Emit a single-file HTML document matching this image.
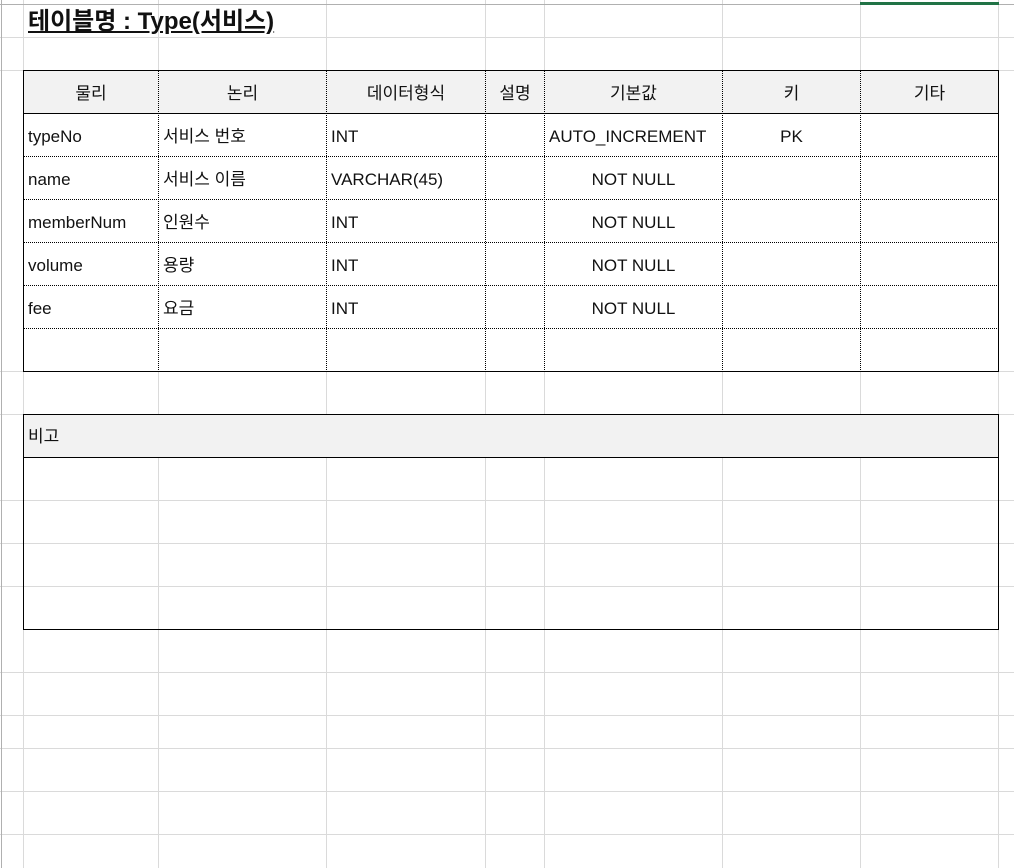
<!DOCTYPE html>
<html><head><meta charset="utf-8"><style>
body{margin:0;width:1014px;height:868px;overflow:hidden;background:#fff;position:relative;font-family:"Liberation Sans","Noto Sans CJK KR",sans-serif;font-size:17px;color:#111}
.t{position:absolute;white-space:nowrap;line-height:20px}
.c{text-align:center}
</style></head><body>
<svg width="1014" height="868" style="position:absolute;left:0;top:0">
<g stroke="#dadada" stroke-width="1">
<line x1="23.5" y1="0" x2="23.5" y2="868"/><line x1="158.5" y1="0" x2="158.5" y2="868"/><line x1="326.5" y1="0" x2="326.5" y2="868"/><line x1="485.5" y1="0" x2="485.5" y2="868"/><line x1="544.5" y1="0" x2="544.5" y2="868"/><line x1="722.5" y1="0" x2="722.5" y2="868"/><line x1="860.5" y1="0" x2="860.5" y2="868"/><line x1="998.5" y1="0" x2="998.5" y2="868"/>
<line x1="0" y1="37.5" x2="1014" y2="37.5"/><line x1="0" y1="70.5" x2="1014" y2="70.5"/><line x1="0" y1="371.5" x2="1014" y2="371.5"/><line x1="0" y1="414.5" x2="1014" y2="414.5"/><line x1="0" y1="500.5" x2="1014" y2="500.5"/><line x1="0" y1="543.5" x2="1014" y2="543.5"/><line x1="0" y1="586.5" x2="1014" y2="586.5"/><line x1="0" y1="672.5" x2="1014" y2="672.5"/><line x1="0" y1="715.5" x2="1014" y2="715.5"/><line x1="0" y1="748.5" x2="1014" y2="748.5"/><line x1="0" y1="791.5" x2="1014" y2="791.5"/><line x1="0" y1="834.5" x2="1014" y2="834.5"/>
</g>
<line x1="1.5" y1="0" x2="1.5" y2="868" stroke="#b0b0b0"/>
<line x1="0" y1="4.5" x2="1014" y2="4.5" stroke="#b0b0b0"/>
<rect x="860" y="2" width="139" height="3" fill="#217346"/>
<rect x="24" y="71" width="974" height="42" fill="#f2f2f2"/>
<rect x="24" y="415" width="974" height="42" fill="#f2f2f2"/>
<rect x="24" y="114" width="974" height="257" fill="#fff"/>
<g stroke="#000" stroke-width="1" stroke-dasharray="1,1">
<line x1="158.5" y1="71" x2="158.5" y2="371"/><line x1="326.5" y1="71" x2="326.5" y2="371"/><line x1="485.5" y1="71" x2="485.5" y2="371"/><line x1="544.5" y1="71" x2="544.5" y2="371"/><line x1="722.5" y1="71" x2="722.5" y2="371"/><line x1="860.5" y1="71" x2="860.5" y2="371"/>
<line x1="24" y1="156.5" x2="998" y2="156.5"/><line x1="24" y1="199.5" x2="998" y2="199.5"/><line x1="24" y1="242.5" x2="998" y2="242.5"/><line x1="24" y1="285.5" x2="998" y2="285.5"/><line x1="24" y1="328.5" x2="998" y2="328.5"/>
</g>
<g stroke="#000" stroke-width="1" fill="none">
<rect x="23.5" y="70.5" width="975" height="301"/>
<line x1="23" y1="113.5" x2="999" y2="113.5"/>
<rect x="23.5" y="414.5" width="975" height="215"/>
<line x1="23" y1="457.5" x2="999" y2="457.5"/>
</g>
</svg>
<div class="t" style="left:28px;top:8px;font-size:24px;font-weight:bold;text-decoration:underline;line-height:27px">테이블명 : Type(서비스)</div>
<div class="t c" style="left:24px;width:134px;top:84px">물리</div>
<div class="t c" style="left:159px;width:167px;top:84px">논리</div>
<div class="t c" style="left:327px;width:158px;top:84px">데이터형식</div>
<div class="t c" style="left:486px;width:58px;top:84px">설명</div>
<div class="t c" style="left:545px;width:177px;top:84px">기본값</div>
<div class="t c" style="left:723px;width:137px;top:84px">키</div>
<div class="t c" style="left:861px;width:137px;top:84px">기타</div>

<div class="t" style="left:28px;top:127px">typeNo</div>
<div class="t" style="left:163px;top:127px">서비스 번호</div>
<div class="t" style="left:331px;top:127px">INT</div>
<div class="t" style="left:549px;top:127px">AUTO_INCREMENT</div>
<div class="t c" style="left:723px;width:137px;top:127px">PK</div>

<div class="t" style="left:28px;top:170px">name</div>
<div class="t" style="left:163px;top:170px">서비스 이름</div>
<div class="t" style="left:331px;top:170px">VARCHAR(45)</div>
<div class="t c" style="left:545px;width:177px;top:170px">NOT NULL</div>

<div class="t" style="left:28px;top:213px">memberNum</div>
<div class="t" style="left:163px;top:213px">인원수</div>
<div class="t" style="left:331px;top:213px">INT</div>
<div class="t c" style="left:545px;width:177px;top:213px">NOT NULL</div>

<div class="t" style="left:28px;top:256px">volume</div>
<div class="t" style="left:163px;top:256px">용량</div>
<div class="t" style="left:331px;top:256px">INT</div>
<div class="t c" style="left:545px;width:177px;top:256px">NOT NULL</div>

<div class="t" style="left:28px;top:299px">fee</div>
<div class="t" style="left:163px;top:299px">요금</div>
<div class="t" style="left:331px;top:299px">INT</div>
<div class="t c" style="left:545px;width:177px;top:299px">NOT NULL</div>

<div class="t" style="left:28px;top:427px">비고</div>
</body></html>
